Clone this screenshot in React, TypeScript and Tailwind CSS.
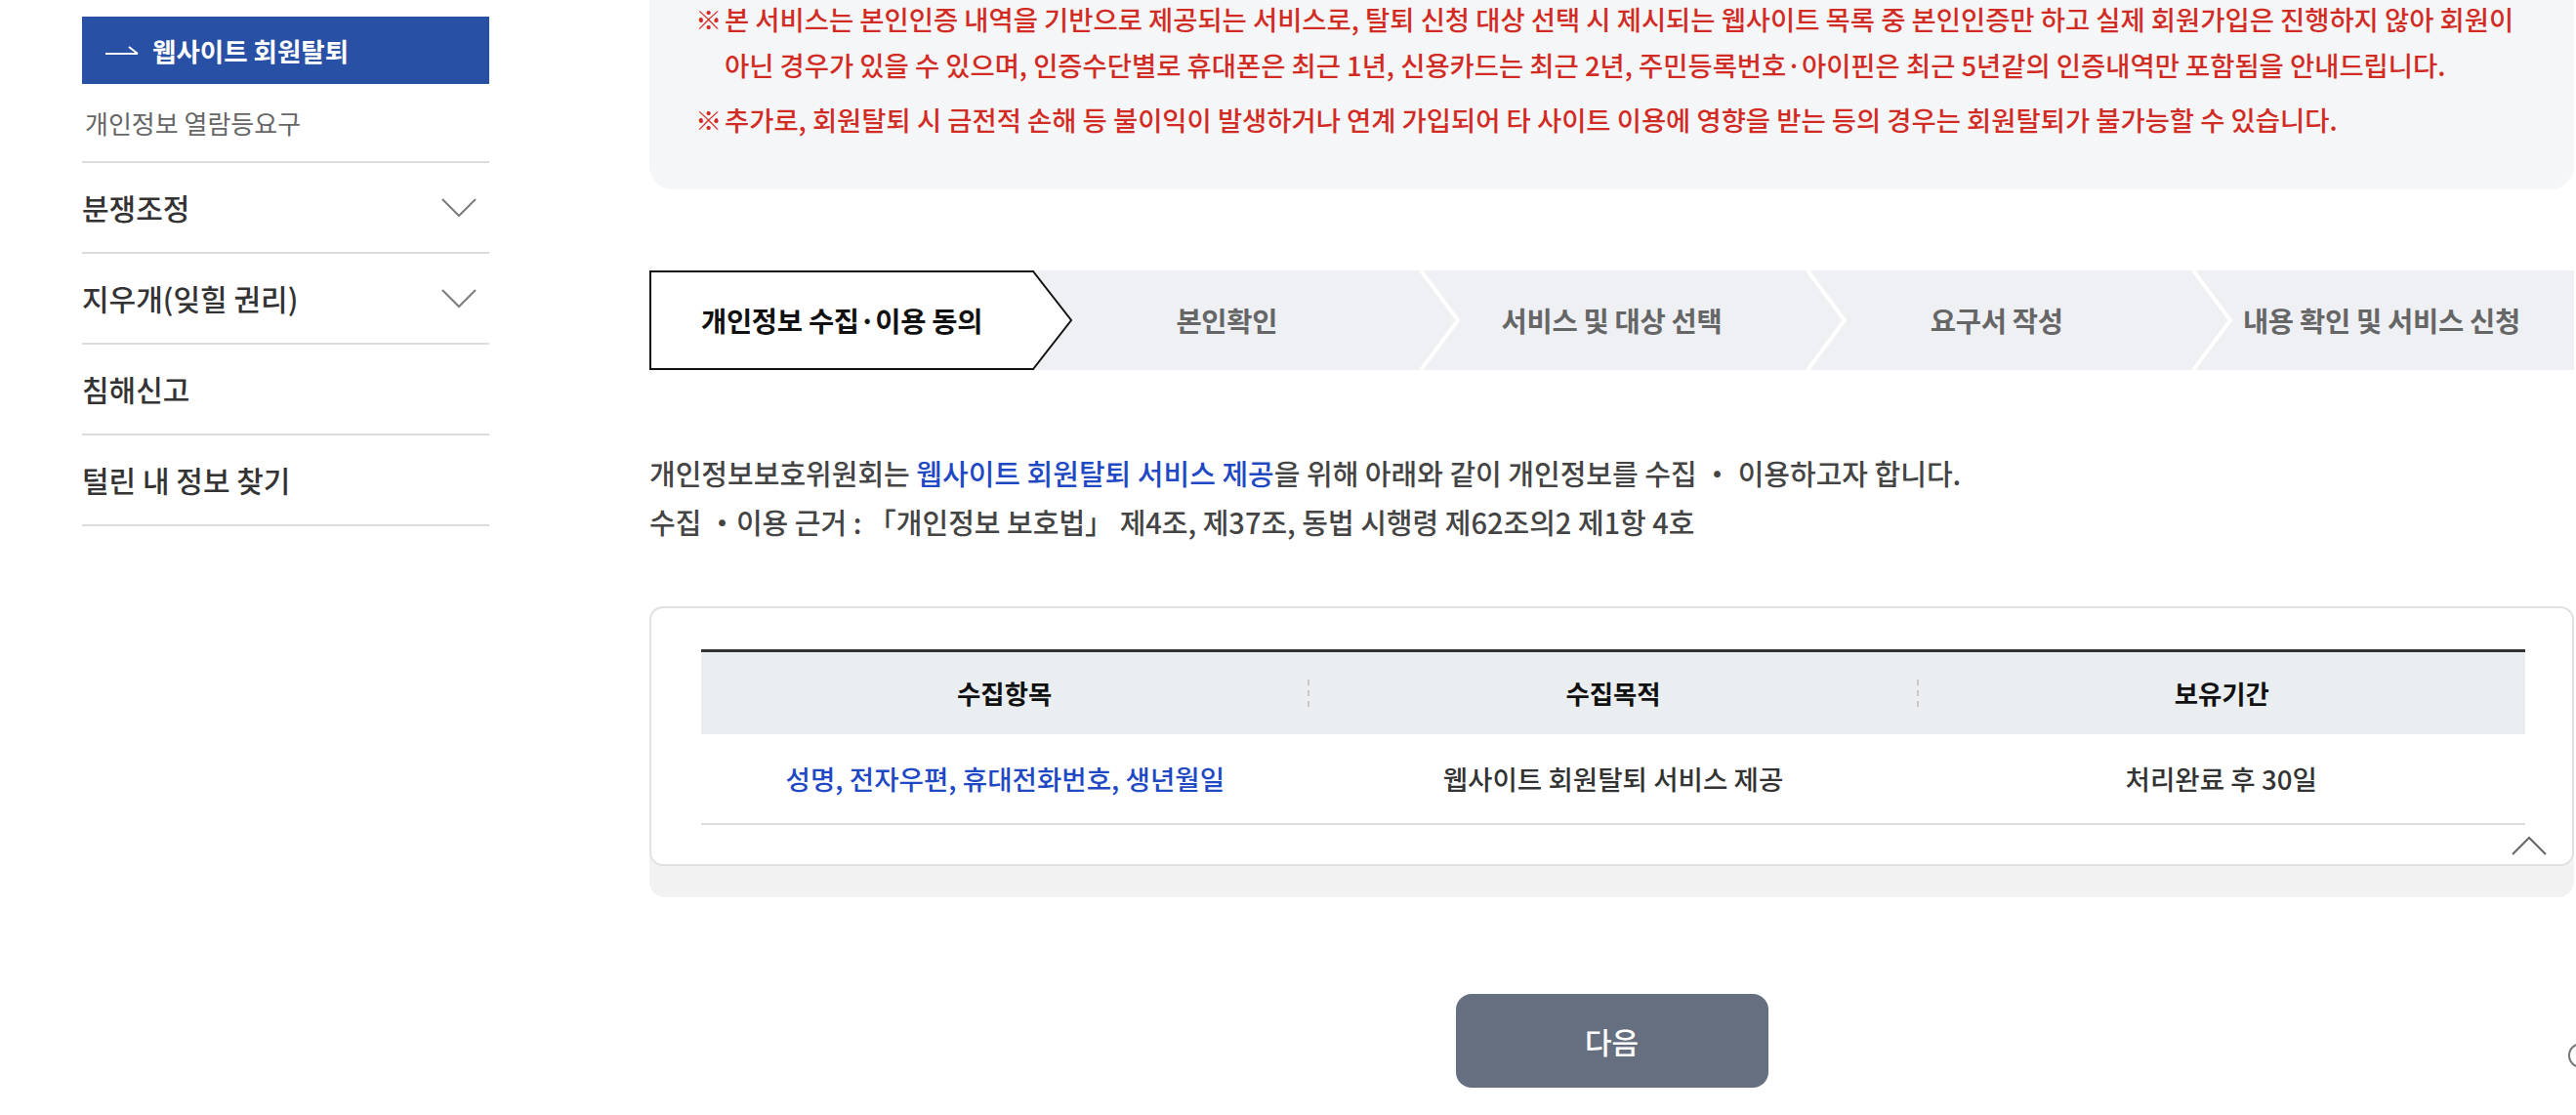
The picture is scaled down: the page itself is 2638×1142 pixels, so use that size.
import React from 'react';

const menus = [
  { label: '분쟁조정', hasSub: true },
  { label: '지우개(잊힐 권리)', hasSub: true },
  { label: '침해신고', hasSub: false },
  { label: '털린 내 정보 찾기', hasSub: false },
];

const steps = ['개인정보 수집·이용 동의', '본인확인', '서비스 및 대상 선택', '요구서 작성', '내용 확인 및 서비스 신청'];

function ArrowRight() {
  return (
    <svg width="34" height="14" viewBox="0 0 34 14" fill="none" aria-hidden="true">
      <line x1="0" y1="10" x2="33" y2="10" stroke="#fff" strokeWidth="2" />
      <line x1="24" y1="3" x2="33" y2="10" stroke="#fff" strokeWidth="2" />
    </svg>
  );
}

function ChevronDown() {
  return (
    <svg width="36" height="20" viewBox="0 0 36 20" fill="none" aria-hidden="true">
      <polyline points="1,1 18,18 35,1" stroke="#7c7c7c" strokeWidth="2" />
    </svg>
  );
}

function ChevronUp() {
  return (
    <svg width="36" height="20" viewBox="0 0 36 20" fill="none" aria-hidden="true">
      <polyline points="1,19 18,2 35,19" stroke="#666" strokeWidth="2" />
    </svg>
  );
}

function Sidebar() {
  return (
    <aside className="w-[417px] shrink-0 pt-[17px]">
      <div className="flex h-[69px] items-center gap-[14px] bg-[#2850a5] pl-[24px] text-[26.5px] font-semibold text-white">
        <ArrowRight />
        <span>웹사이트 회원탈퇴</span>
      </div>
      <div className="flex h-[81px] items-center border-b-2 border-[#dcdcdc] pl-[3px] text-[26px] text-[#666]">
        개인정보 열람등요구
      </div>
      {menus.map((menu) => (
        <div
          key={menu.label}
          className="flex h-[93px] items-center justify-between border-b-2 border-[#dcdcdc] pr-[13px] text-[30px] font-medium text-[#333]"
        >
          <span>{menu.label}</span>
          {menu.hasSub && <ChevronDown />}
        </div>
      ))}
    </aside>
  );
}

function Notice() {
  return (
    <div className="-mt-[4px] rounded-b-[24px] bg-[#f5f6f8] pb-[48px] pl-[47px] text-[27.4px] font-medium leading-[47px] text-[#d12b24]">
      <div className="flex">
        <span className="w-[30px] shrink-0">※</span>
        <div>
          <div className="whitespace-nowrap">
            본 서비스는 본인인증 내역을 기반으로 제공되는 서비스로, 탈퇴 신청 대상 선택 시 제시되는 웹사이트 목록 중 본인인증만 하고 실제 회원가입은 진행하지 않아 회원이
          </div>
          <div className="whitespace-nowrap">
            아닌 경우가 있을 수 있으며, 인증수단별로 휴대폰은 최근 1년, 신용카드는 최근 2년, 주민등록번호·아이핀은 최근 5년같의 인증내역만 포함됨을 안내드립니다.
          </div>
        </div>
      </div>
      <div className="mt-[9px] flex">
        <span className="w-[30px] shrink-0">※</span>
        <div className="whitespace-nowrap">
          추가로, 회원탈퇴 시 금전적 손해 등 불이익이 발생하거나 연계 가입되어 타 사이트 이용에 영향을 받는 등의 경우는 회원탈퇴가 불가능할 수 있습니다.
        </div>
      </div>
    </div>
  );
}

function Stepper() {
  return (
    <div className="relative mt-[83px] h-[102px] bg-[#eef0f4]">
      <svg className="absolute inset-0" width="1971" height="102" viewBox="0 0 1971 102" fill="none" aria-hidden="true">
        <polygon points="1,1 393,1 432,51 393,101 1,101" fill="#fff" stroke="#111" strokeWidth="2" />
        {[790, 1186, 1581].map((x) => (
          <polyline key={x} points={`${x},0 ${x + 38},51 ${x},102`} stroke="#fff" strokeWidth="4" />
        ))}
      </svg>
      <div className="relative grid h-full grid-cols-5">
        {steps.map((step, i) => (
          <div
            key={step}
            className={
              i === 0
                ? 'flex items-center justify-center text-[28.5px] font-bold tracking-[-0.3px] text-[#111]'
                : 'flex items-center justify-center text-[28.5px] font-semibold tracking-[-0.3px] text-[#666]'
            }
          >
            {step}
          </div>
        ))}
      </div>
    </div>
  );
}

function ConsentTable() {
  return (
    <div className="mt-[62px] rounded-[16px] bg-[#f2f2f2] pb-[32px]">
      <div className="relative rounded-[14px] border-2 border-[#e1e1e1] bg-white pb-[40px] pl-[51px] pt-[42px]">
        <div className="w-[1868px]">
          <div className="flex h-[87px] items-center border-t-[3px] border-[#333] bg-[#ebeef1] text-[26.4px] font-bold text-[#111]">
            <div className="flex-1 text-center">수집항목</div>
            <div className="h-[28px] border-l-2 border-dashed border-[#c8c8c8]" />
            <div className="flex-1 text-center">수집목적</div>
            <div className="h-[28px] border-l-2 border-dashed border-[#c8c8c8]" />
            <div className="flex-1 text-center">보유기간</div>
          </div>
          <div className="flex h-[93px] items-center border-b-2 border-[#dedede] text-[27.6px] font-medium text-[#333]">
            <div className="flex-1 text-center text-[#1f49c4]">성명, 전자우편, 휴대전화번호, 생년월일</div>
            <div className="flex-1 text-center">웹사이트 회원탈퇴 서비스 제공</div>
            <div className="flex-1 text-center">처리완료 후 30일</div>
          </div>
        </div>
        <button type="button" className="absolute bottom-[9px] right-[26px]" aria-label="접기">
          <ChevronUp />
        </button>
      </div>
    </div>
  );
}

export default function App() {
  return (
    <div className="relative min-h-screen overflow-hidden bg-white font-['Noto_Sans_CJK_KR',sans-serif]">
      <div className="flex pl-[84px]">
        <Sidebar />
        <main className="ml-[164px] w-[1971px] shrink-0">
          <Notice />
          <Stepper />
          <div className="mt-[80px] text-[29px] font-medium leading-[50px] text-[#444]">
            <p>
              개인정보보호위원회는 <span className="text-[#1f49c4]">웹사이트 회원탈퇴 서비스 제공</span>을 위해 아래와 같이 개인정보를 수집 ・ 이용하고자 합니다.
            </p>
            <p>수집 ・이용 근거 : 「개인정보 보호법」 제4조, 제37조, 동법 시행령 제62조의2 제1항 4호</p>
          </div>
          <ConsentTable />
          <div className="mt-[99px] flex justify-center">
            <button
              type="button"
              className="h-[96px] w-[320px] rounded-[16px] bg-[#666f7f] text-[30px] font-medium text-white"
            >
              다음
            </button>
          </div>
        </main>
      </div>
      <div className="absolute left-[2630px] top-[1068px] h-[26px] w-[26px] rounded-full border-2 border-[#777]" />
    </div>
  );
}
